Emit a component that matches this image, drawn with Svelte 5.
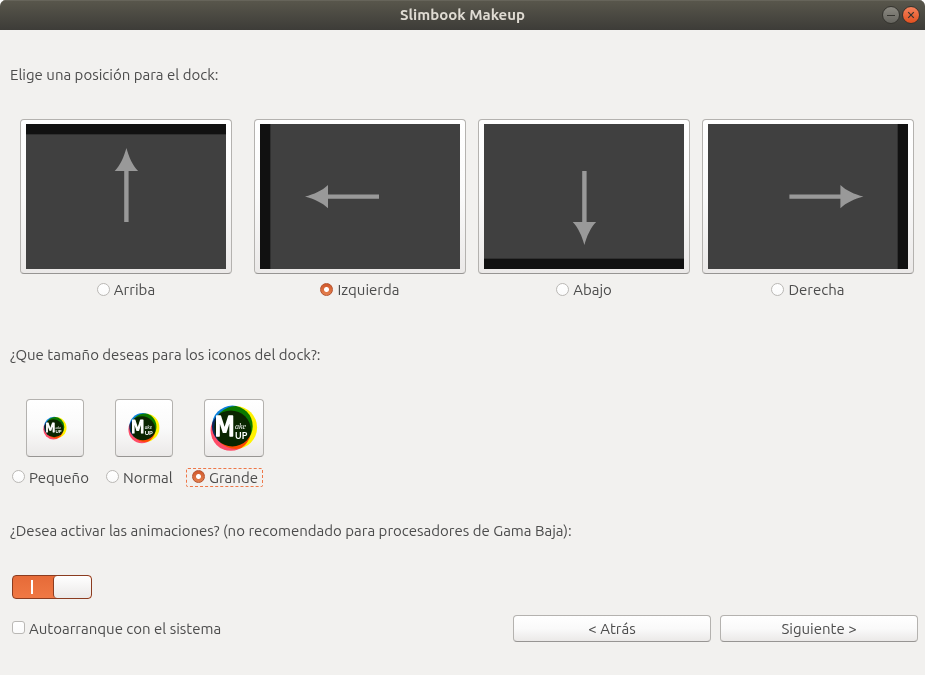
<script>
  let position = $state('izquierda');
  let size = $state('grande');
  let animations = $state(true);
  let autostart = $state(false);

  const positions = [
    { id: 'arriba', label: 'Arriba', bar: [0, 0, 200, 10], edge: [0, 10, 200, 1], x: 100.4, y: 24, turn: 0 },
    { id: 'izquierda', label: 'Izquierda', bar: [0, 0, 10, 145], edge: [10, 0, 1, 145], x: 45, y: 72.6, turn: -90 },
    { id: 'abajo', label: 'Abajo', bar: [0, 135, 200, 10], edge: [0, 134, 200, 1], x: 100.4, y: 121, turn: 180 },
    { id: 'derecha', label: 'Derecha', bar: [190, 0, 10, 145], edge: [189, 0, 1, 145], x: 155.4, y: 72.6, turn: 90 }
  ];

  const sizes = [
    { id: 'pequeno', label: 'Pequeño', px: 24 },
    { id: 'normal', label: 'Normal', px: 32 },
    { id: 'grande', label: 'Grande', px: 48 }
  ];
</script>

<div class="window">
  <header class="titlebar">
    <h1>Slimbook Makeup</h1>
    <div class="controls">
      <button class="control minimise" aria-label="Minimizar">
        <svg viewBox="0 0 16 16"><path d="M4 8.500h8" /></svg>
      </button>
      <button class="control close" aria-label="Cerrar">
        <svg viewBox="0 0 16 16"><path d="M5.200 5.200l5.600 5.600M10.800 5.200l-5.600 5.600" /></svg>
      </button>
    </div>
  </header>

  <main>
    <h2 id="position-title">Elige una posición para el dock:</h2>
    <div class="positions" role="radiogroup" aria-labelledby="position-title">
      {#each positions as p (p.id)}
        <div class="position">
          <button class="raised preview" aria-label={p.label} onclick={() => (position = p.id)}>
            <svg viewBox="0 0 200 145">
              <rect width="200" height="145" fill="#404040" />
              <rect x={p.edge[0]} y={p.edge[1]} width={p.edge[2]} height={p.edge[3]} fill="#303030" />
              <rect x={p.bar[0]} y={p.bar[1]} width={p.bar[2]} height={p.bar[3]} fill="#111" />
              <path
                transform="translate({p.x} {p.y}) rotate({p.turn})"
                fill="#999"
                d="M0 0C2.500 9 6 17 11.700 23H2.200V74H-2.200V23H-11.700C-6 17 -2.500 9 0 0Z"
              />
            </svg>
          </button>
          <label class="choice">
            <input type="radio" name="position" value={p.id} bind:group={position} />
            {p.label}
          </label>
        </div>
      {/each}
    </div>

    <h2 id="size-title">¿Que tamaño deseas para los iconos del dock?:</h2>
    <div class="icons">
      {#each sizes as s (s.id)}
        <button class="raised icon" aria-label={s.label} onclick={() => (size = s.id)}>
          <svg class="logo" viewBox="0 0 48 48" width={s.px} height={s.px}>
            <g class="inks">
              <circle cx="22.300" cy="22" r="20.400" fill="#0a80dc" />
              <circle cx="25.700" cy="23.500" r="21.400" fill="#fff200" />
              <circle cx="20.800" cy="26.600" r="20.200" fill="#ff4d68" />
            </g>
            <text class="initial" x="4.500" y="32">M</text>
            <text class="script" x="25" y="25">ake</text>
            <text class="up" x="25" y="34.500">UP</text>
          </svg>
        </button>
      {/each}
    </div>
    <div class="sizes" role="radiogroup" aria-labelledby="size-title">
      {#each sizes as s (s.id)}
        <label class="choice" class:focused={s.id === size}>
          <input type="radio" name="size" value={s.id} bind:group={size} />
          {s.label}
        </label>
      {/each}
    </div>

    <h2 id="animation-title">
      ¿Desea activar las animaciones? (no recomendado para procesadores de Gama Baja):
    </h2>
    <input class="switch" type="checkbox" role="switch" aria-labelledby="animation-title" bind:checked={animations} />

    <footer>
      <label class="choice">
        <input type="checkbox" bind:checked={autostart} />
        Autoarranque con el sistema
      </label>
      <div class="navigation">
        <button class="raised step">&lt; Atrás</button>
        <button class="raised step">Siguiente &gt;</button>
      </div>
    </footer>
  </main>
</div>

<style>
  :global(body) {
    background: #fff;
  }

  .window {
    box-sizing: border-box;
    min-height: 100vh;
    overflow: hidden;
    border-radius: 6px 6px 0 0;
    background: #f2f1ef;
    color: #4c4c4c;
    font: 15px/20px Ubuntu, 'Noto Sans', sans-serif;
  }

  .titlebar {
    display: grid;
    grid-template-columns: 1fr auto 1fr;
    align-items: center;
    box-sizing: border-box;
    height: 30px;
    padding: 0 5px;
    background: linear-gradient(#59574c, #3d3c38);
    box-shadow: inset 0 1px #66645a;
  }

  h1 {
    grid-column: 2;
    margin: 0;
    color: #dfdbd2;
    font-size: 15px;
    font-weight: 700;
    line-height: 20px;
  }

  .controls {
    display: flex;
    justify-content: flex-end;
    gap: 2px;
  }

  .control {
    box-sizing: border-box;
    width: 18px;
    height: 18px;
    padding: 0;
    border: 1px solid #35342f;
    border-radius: 50%;
  }

  .control svg {
    display: block;
    width: 16px;
    height: 16px;
    fill: none;
    stroke: #35342f;
    stroke-width: 1.2;
  }

  .minimise {
    background: linear-gradient(#8b8981, #66655f);
  }

  .close {
    background: linear-gradient(#f6825c, #e2501f);
  }

  h2 {
    margin: 0 10px 34px;
    font-size: 15px;
    font-weight: 400;
    line-height: 20px;
  }

  main {
    padding-top: 35px;
  }

  .positions {
    display: flex;
    gap: 12px;
    margin-bottom: 45px;
    padding: 0 11px 0 20px;
  }

  .position {
    display: flex;
    flex: 1;
    flex-direction: column;
    align-items: center;
    gap: 6px;
  }

  .position:first-child {
    margin-right: 10px;
  }

  .raised {
    box-sizing: border-box;
    border: 1px solid #b4b2af;
    border-bottom-color: #979593;
    border-radius: 4px;
    background: linear-gradient(#fff, #fafafa 50%, #ebe9e8);
    color: inherit;
    font: inherit;
  }

  .preview {
    width: 100%;
    padding: 4px 5px;
  }

  .preview svg {
    display: block;
    width: 100%;
  }

  .choice {
    display: flex;
    align-items: center;
    gap: 4px;
    white-space: nowrap;
  }

  .choice input {
    appearance: none;
    box-sizing: border-box;
    width: 13px;
    height: 13px;
    margin: 0 0 2px;
    border: 1px solid #bab8b5;
    border-radius: 3px;
    background: linear-gradient(#fff, #fafafa);
  }

  .choice input[type='radio'] {
    border-radius: 50%;
  }

  .choice input[type='radio']:checked {
    border-color: #b4532f;
    background: radial-gradient(circle, #fff 2px, transparent 3px), linear-gradient(#d1592c, #e5814f);
  }

  .choice input[type='checkbox']:checked {
    border-color: #b4532f;
    background: #e5703e;
  }

  .icons {
    display: flex;
    gap: 31px;
    margin-bottom: 11px;
    padding-left: 26px;
  }

  .icon {
    display: flex;
    align-items: center;
    justify-content: center;
    min-width: 58px;
    height: 58px;
    padding: 0 5px;
  }

  .logo {
    display: block;
    flex: none;
    fill: #fff;
  }

  .inks {
    isolation: isolate;
  }

  .inks circle {
    mix-blend-mode: multiply;
  }

  .initial {
    font: 400 26px 'Ubuntu Condensed', 'Liberation Sans Narrow', 'DejaVu Sans Condensed', sans-serif;
    stroke: #fff;
    stroke-linejoin: round;
    stroke-width: 1.6;
  }

  .script {
    font: italic 8px 'Liberation Serif', serif;
  }

  .up {
    font: 700 9px Lato, sans-serif;
  }

  .sizes {
    display: grid;
    grid-template-columns: 94px 80px max-content;
    margin-bottom: 34px;
    padding-left: 12px;
  }

  .sizes .choice {
    height: 19px;
  }

  .sizes .focused {
    box-sizing: border-box;
    padding: 0 4px 0 5px;
    border: 1px dashed #ee7748;
    border-radius: 2px;
  }

  .switch {
    appearance: none;
    display: block;
    box-sizing: border-box;
    width: 80px;
    height: 24px;
    margin: 0 12px;
    border: 1px solid #a5a29f;
    border-radius: 4px;
    background: linear-gradient(#fff, #ebe9e8) left / 38px 100% no-repeat #d4d2cf;
  }

  .switch:checked {
    display: flex;
    align-items: center;
    justify-content: space-between;
    border-color: #8b3c20;
    background: linear-gradient(#e66b38, #f07844);
  }

  .switch:checked::before {
    content: '';
    width: 2px;
    height: 14px;
    margin-left: 18px;
    background: #fff;
  }

  .switch:checked::after {
    content: '';
    box-sizing: border-box;
    width: 38px;
    height: 22px;
    border-left: 1px solid #8b3c20;
    border-radius: 4px;
    background: linear-gradient(#fff, #ebe9e8);
  }

  footer {
    display: flex;
    align-items: center;
    justify-content: space-between;
    margin-top: 16px;
    padding: 0 7px 0 12px;
  }

  .navigation {
    display: flex;
    gap: 9px;
  }

  .step {
    width: 198px;
    height: 27px;
    padding: 0;
  }
</style>
